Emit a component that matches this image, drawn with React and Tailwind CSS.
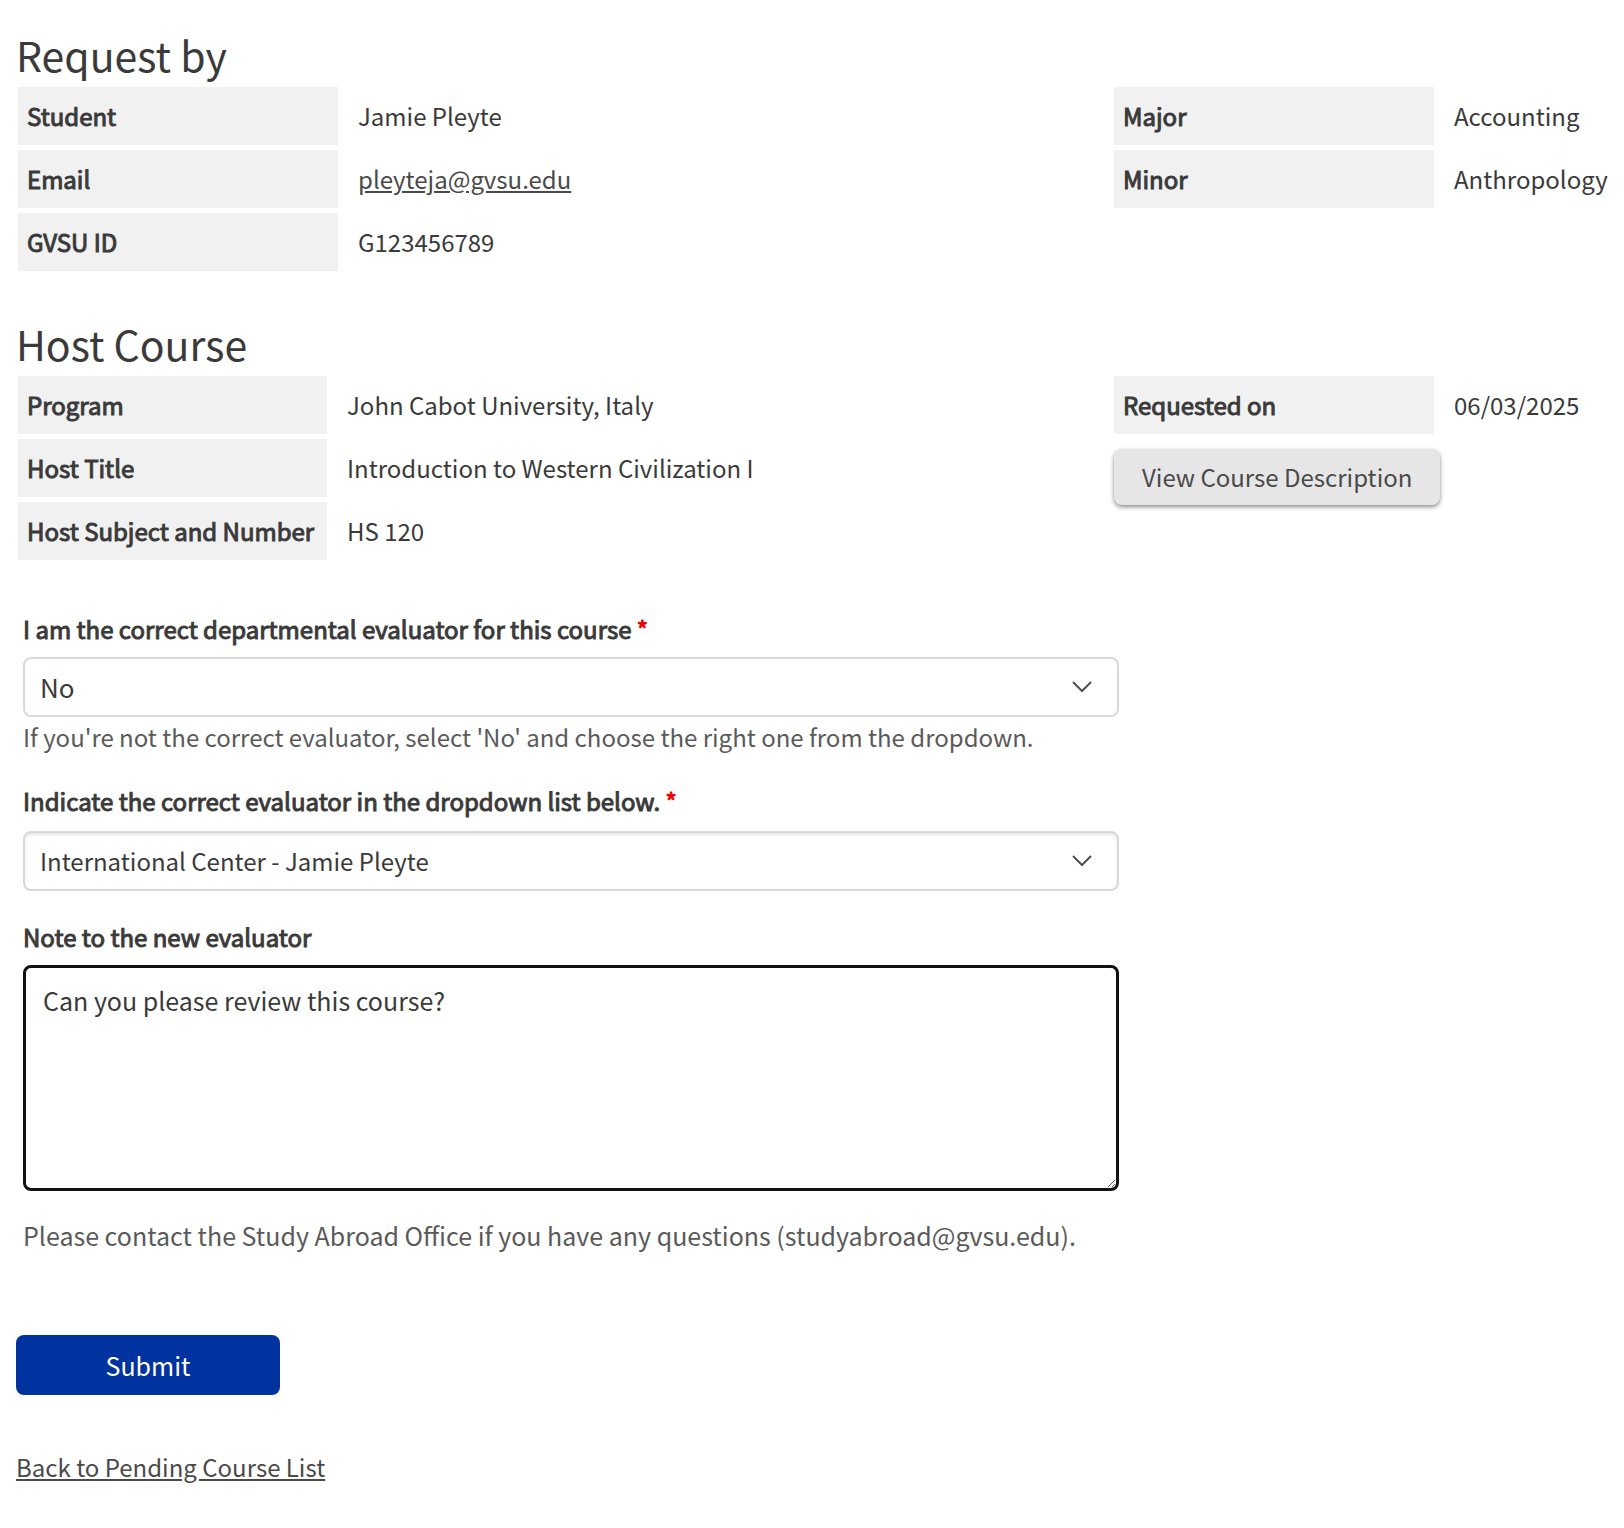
/**
 * Course Evaluation Request Page
 * Shows the request details and lets the evaluator forward it to someone else
 */

import { useState } from "react";

/* Label / value table used by both sections */
const DetailTable = ({ rows, labelWidth = "w-80 min-w-80" }) => {
  return (
    <table className="border-separate border-spacing-0 text-left">
      <tbody>
        {rows.map((row) => (
          <tr key={row.label} className="h-[63px]">
            <th
              scope="row"
              className={`${labelWidth} border-b-[5px] border-white bg-[#f1f1f1] px-[9px] font-normal whitespace-nowrap [-webkit-text-stroke:1px]`}
            >
              {row.label}
            </th>
            <td className="border-b-[5px] border-white pl-5 whitespace-nowrap">
              {row.href ? (
                <a href={row.href} className="text-[#4a4a4a] underline">
                  {row.value}
                </a>
              ) : (
                row.value
              )}
            </td>
          </tr>
        ))}
      </tbody>
    </table>
  );
};

const FieldLabel = ({ htmlFor, required, children }) => {
  return (
    <label htmlFor={htmlFor} className="block leading-8 [-webkit-text-stroke:1px]">
      {children}
      {required && <span className="text-[#f00000]"> *</span>}
    </label>
  );
};

const SelectField = ({ id, options, className }) => {
  return (
    <div className="relative">
      <select
        id={id}
        className={`block h-[60px] w-full appearance-none rounded-lg border-2 border-[#d9d9d9] bg-white px-[15px] ${className}`}
      >
        {options.map((option) => (
          <option key={option}>{option}</option>
        ))}
      </select>
      {/* Chevron */}
      <svg
        className="pointer-events-none absolute top-6 right-[27px] h-3 w-5"
        viewBox="0 0 20 12"
        fill="none"
        stroke="#505050"
        strokeWidth="2"
        aria-hidden="true"
      >
        <path d="M1 1l9 9 9-9" />
      </svg>
    </div>
  );
};

const studentRows = [
  { label: "Student", value: "Jamie Pleyte" },
  { label: "Email", value: "pleyteja@gvsu.edu", href: "mailto:pleyteja@gvsu.edu" },
  { label: "GVSU ID", value: "G123456789" },
];

const studyRows = [
  { label: "Major", value: "Accounting" },
  { label: "Minor", value: "Anthropology" },
];

const courseRows = [
  { label: "Program", value: "John Cabot University, Italy" },
  { label: "Host Title", value: "Introduction to Western Civilization I" },
  { label: "Host Subject and Number", value: "HS 120" },
];

const requestRows = [{ label: "Requested on", value: "06/03/2025" }];

const App = () => {
  const [note, setNote] = useState("Can you please review this course?");

  return (
    <main className="min-h-screen bg-white px-[18px] pt-7 pb-8 font-['Noto_Sans_CJK_SC',sans-serif] text-[24px] leading-8 text-[#3a3a3a]">
      {/* Student details */}
      <section>
        <h2 className="-ml-0.5 pb-1.5 text-[41px] leading-[53px]">Request by</h2>
        <div className="grid grid-cols-[minmax(0,1fr)_492px] items-start">
          <DetailTable rows={studentRows} />
          <DetailTable rows={studyRows} />
        </div>
      </section>

      {/* Course details */}
      <section className="mt-[41px]">
        <h2 className="-ml-0.5 pb-1.5 text-[41px] leading-[53px]">Host Course</h2>
        <div className="grid grid-cols-[minmax(0,1fr)_492px] items-start">
          <DetailTable rows={courseRows} labelWidth="w-[309px]" />
          <div>
            <DetailTable rows={requestRows} />
            <button
              type="button"
              className="mt-2.5 h-14 rounded-lg bg-[#e6e6e6] px-7 text-[#4a4a4a] shadow-[0_2px_4px_rgba(0,0,0,0.45)]"
            >
              View Course Description
            </button>
          </div>
        </div>
      </section>

      {/* Evaluator form */}
      <form onSubmit={(e) => e.preventDefault()}>
        <div className="mt-12 ml-[5px] max-w-[1096px]">
          <FieldLabel htmlFor="is-evaluator" required>
            I am the correct departmental evaluator for this course
          </FieldLabel>
          <div className="mt-3">
            <SelectField id="is-evaluator" options={["No", "Yes"]} className="text-[26px]" />
          </div>
          <p className="mt-1 text-[#5a5a5a]">
            If you're not the correct evaluator, select 'No' and choose the right one from the dropdown.
          </p>

          <div className="mt-8">
            <FieldLabel htmlFor="new-evaluator" required>
              Indicate the correct evaluator in the dropdown list below.
            </FieldLabel>
          </div>
          <div className="mt-3.5">
            <SelectField
              id="new-evaluator"
              options={["International Center - Jamie Pleyte"]}
              className="shadow-[inset_0_2px_3px_rgba(0,0,0,0.1)]"
            />
          </div>

          <div className="mt-[30px]">
            <FieldLabel htmlFor="note">Note to the new evaluator</FieldLabel>
          </div>
          <textarea
            id="note"
            value={note}
            onChange={(e) => setNote(e.target.value)}
            className="mt-3 block h-[226px] w-full rounded-lg border-[3px] border-[#111] bg-white px-[17px] py-4 text-[25px]"
          />
          <p className="mt-7 text-[25px] text-[#5a5a5a]">
            Please contact the Study Abroad Office if you have any questions (studyabroad@gvsu.edu).
          </p>
        </div>

        <button
          type="submit"
          className="mt-[84px] -ml-0.5 block h-[60px] w-66 rounded-lg bg-[#0032a0] text-[25px] text-white"
        >
          Submit
        </button>
      </form>

      <a href="#pending" className="mt-14 -ml-0.5 inline-block text-[#4a4a4a] underline">
        Back to Pending Course List
      </a>
    </main>
  );
};

export default App;
